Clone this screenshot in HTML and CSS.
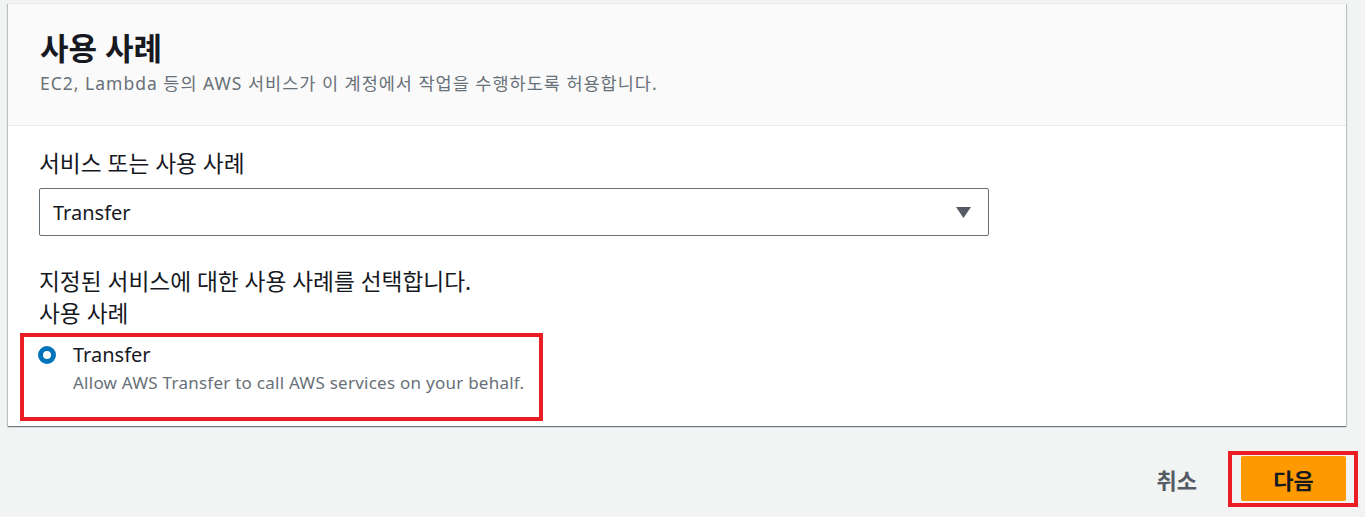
FILE: index.html
```html
<!DOCTYPE html>
<html lang="ko">
<head>
<meta charset="utf-8">
<title>사용 사례</title>
<link rel="stylesheet" href="styles.css">
</head>
<body>
<div class="page">
  <section class="card">
    <header class="card-header">
      <h2 class="title">사용 사례</h2>
      <p class="subtitle">EC2, Lambda 등의 AWS 서비스가 이 계정에서 작업을 수행하도록 허용합니다.</p>
    </header>
    <div class="card-body">
      <div class="label">서비스 또는 사용 사례</div>
      <div class="select">
        <span class="select-value">Transfer</span>
        <svg class="caret" width="15" height="11" viewBox="0 0 15 11"><polygon points="0,0 15,0 7.5,11" fill="#545b64"/></svg>
      </div>
      <div class="label label-gap">지정된 서비스에 대한 사용 사례를 선택합니다.</div>
      <div class="label">사용 사례</div>
      <div class="highlight">
        <div class="option">
          <span class="radio"></span>
          <div class="option-text">
            <div class="option-title">Transfer</div>
            <div class="option-desc">Allow AWS Transfer to call AWS services on your behalf.</div>
          </div>
        </div>
      </div>
    </div>
  </section>
</div>
<div class="footer">
  <button class="btn-link">취소</button>
  <div class="btn-highlight">
    <button class="btn-primary">다음</button>
  </div>
</div>
</body>
</html>
```
FILE: styles.css
```css
* { box-sizing: border-box; }
html, body { margin: 0; padding: 0; }
body {
  background: #f2f3f3;
  font-family: "Noto Sans", "Noto Sans CJK KR", sans-serif;
  color: #16191f;
}
.page {
  padding: 3px 19px 0 8px;
}
.card {
  background: #fff;
  box-shadow: 0 1px 1px 0 rgba(0,28,36,.35), 1px 1px 1px 0 rgba(0,28,36,.18), -1px 1px 1px 0 rgba(0,28,36,.18);
  border-top: 1px solid #eaeded;
}
.card-header {
  background: #fafafa;
  border-bottom: 1px solid #eaeded;
  padding: 24px 32px 0 32px;
  height: 122px;
}
.title {
  margin: 0;
  font-size: 31px;
  font-weight: 700;
  line-height: 40px;
  color: #16191f;
}
.subtitle {
  margin: 3px 0 0 0;
  font-size: 17.5px;
  letter-spacing: 1px;
  line-height: 24px;
  color: #687078;
}
.card-body {
  padding: 22px 31px 5px 31px;
}
.label {
  font-size: 22.7px;
  line-height: 32px;
  color: #16191f;
}
.select {
  margin-top: 8px;
  width: 950px;
  height: 48px;
  border: 1px solid #687078;
  border-radius: 2px;
  display: flex;
  align-items: center;
  justify-content: space-between;
  padding: 0 17px 0 13px;
}
.select-value {
  font-size: 20px;
  color: #16191f;
}
.caret { display: block; }
.label-gap { margin-top: 30px; }
.highlight {
  margin-left: -19px;
  margin-top: 3px;
  width: 523px;
  border: 4px solid #ec1c24;
  padding: 3px 10px 22px 14px;
}
.option {
  display: flex;
  align-items: flex-start;
  gap: 17px;
}
.radio {
  flex: none;
  width: 18px;
  height: 18px;
  margin-top: 6px;
  border-radius: 50%;
  border: 5px solid #0073bb;
  background: #fff;
}
.option-title {
  font-size: 20px;
  line-height: 30px;
  color: #16191f;
}
.option-desc {
  font-size: 17px;
  letter-spacing: 0.25px;
  line-height: 25px;
  color: #687078;
}
.footer {
  display: flex;
  justify-content: flex-end;
  align-items: center;
  padding: 25px 7px 0 0;
}
button {
  font-family: "Noto Sans", "Noto Sans CJK KR", sans-serif;
  border: none;
  cursor: pointer;
}
.btn-link {
  background: transparent;
  color: #545b64;
  font-size: 22px;
  font-weight: 700;
  padding: 0 20px;
  margin-right: 11px;
}
.btn-highlight {
  border: 4px solid #ec1c24;
  padding: 1px 8px 2px 9px;
  width: 130px;
}
.btn-primary {
  display: block;
  width: 105px;
  height: 45px;
  background: #ff9900;
  color: #16191f;
  border-radius: 2px;
  font-size: 22px;
  font-weight: 700;
}
```
